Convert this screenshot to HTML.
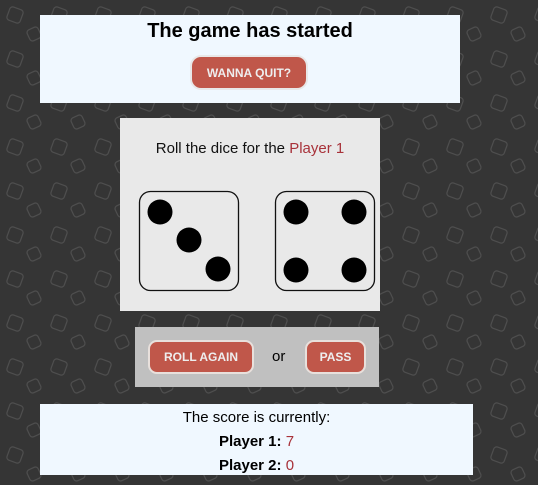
<!DOCTYPE html>
<html><head><style>
body{margin:0;width:538px;height:485px;background:#353535;position:relative;overflow:hidden;font-family:"Liberation Sans",sans-serif}
.p{position:absolute;box-sizing:border-box}
.btn{position:absolute;box-sizing:border-box;background:#c0574a;color:#eee;font-weight:bold;font-size:12px;border-radius:9px;display:flex;align-items:center;justify-content:center}
.t{position:absolute;left:0;right:0;text-align:center}
</style></head><body>
<svg class="p" style="left:0;top:0" width="538" height="485">
<defs><pattern id="d" width="44" height="44" patternUnits="userSpaceOnUse"><rect x="8" y="8" width="14" height="14" rx="3" fill="none" stroke="#4e4e4e" stroke-width="1.2" transform="rotate(20 15 15)"/><rect x="28" y="28" width="12" height="12" rx="3" fill="none" stroke="#4e4e4e" stroke-width="1.2" transform="rotate(-25 34 34)"/></pattern></defs>
<rect width="538" height="485" fill="url(#d)"/></svg>
<div class="p" style="left:40px;top:15px;width:420px;height:88px;background:#f0f8ff">
<div class="t" style="top:5px;font-size:20px;font-weight:bold">The game has started</div>
<div class="btn" style="left:152px;top:42px;width:114px;height:31px;box-shadow:0 0 0 2px #e8e8e8">WANNA QUIT?</div>
</div>
<div class="p" style="left:120px;top:118px;width:260px;height:193px;background:#e9e9e9">
<div class="t" style="top:22px;font-size:15px;color:#111">Roll the dice for the <span style="color:#a8323a">Player 1</span></div>
</div>
<svg class="p" style="left:0;top:0" width="538" height="485">
<rect x="139.5" y="191.5" width="99" height="99" rx="11" fill="none" stroke="#111" stroke-width="1.3"/>
<rect x="275.5" y="191.5" width="99" height="99" rx="11" fill="none" stroke="#111" stroke-width="1.3"/>
<g fill="#000"><circle cx="160" cy="212" r="12.5"/><circle cx="189" cy="240" r="12.5"/><circle cx="218" cy="269" r="12.5"/>
<circle cx="296" cy="212" r="12.5"/><circle cx="354" cy="212" r="12.5"/><circle cx="296" cy="270" r="12.5"/><circle cx="354" cy="270" r="12.5"/></g></svg>
<div class="p" style="left:135px;top:327px;width:244px;height:60px;background:#c0c0c0"></div>
<div class="btn" style="left:148px;top:340px;width:106px;height:34px;border:2px solid #e8e0dc">ROLL AGAIN</div>
<div class="p" style="left:272px;top:348px;font-size:15px">or</div>
<div class="btn" style="left:305px;top:340px;width:61px;height:34px;border:2px solid #e8e0dc">PASS</div>
<div class="p" style="left:40px;top:404px;width:433px;height:71px;background:#f0f8ff;font-size:15px">
<div class="t" style="left:-2px;top:5px;right:auto;width:437px">The score is currently:</div>
<div class="t" style="top:29px;right:auto;width:433px;font-weight:bold">Player 1: <span style="color:#a8323a;font-weight:normal">7</span></div>
<div class="t" style="top:53px;right:auto;width:433px;font-weight:bold">Player 2: <span style="color:#a8323a;font-weight:normal">0</span></div>
</div>
</body></html>
